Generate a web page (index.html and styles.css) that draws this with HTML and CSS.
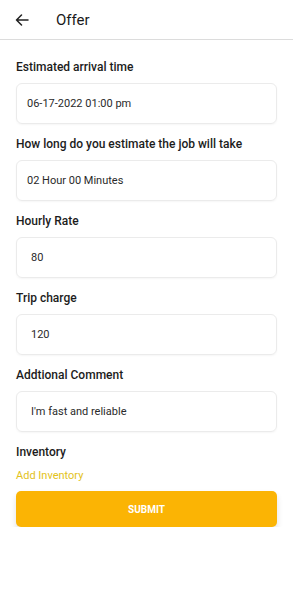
FILE: index.html
```html
<!DOCTYPE html>
<html lang="en">
<head>
  <meta charset="UTF-8">
  <meta name="viewport" content="width=device-width, initial-scale=1.0">
  <title>Offer</title>
  <link rel="stylesheet" href="styles.css">
</head>
<body>
  <div class="topbar">
    <svg class="back" width="14" height="12" viewBox="0 0 14 12">
      <path d="M13 6H1.5M6.5 1L1.5 6l5 5" fill="none" stroke="#222" stroke-width="1.5" stroke-linecap="round" stroke-linejoin="round"/>
    </svg>
    <span class="title">Offer</span>
  </div>

  <div class="form">
    <div class="label">Estimated arrival time</div>
    <div class="field">06-17-2022 01:00 pm</div>

    <div class="label">How long do you estimate the job will take</div>
    <div class="field">02 Hour 00 Minutes</div>

    <div class="label">Hourly Rate</div>
    <div class="field num">80</div>

    <div class="label">Trip charge</div>
    <div class="field num">120</div>

    <div class="label">Addtional Comment</div>
    <div class="field num">I'm fast and reliable</div>

    <div class="label">Inventory</div>
    <div class="add">Add Inventory</div>
    <div class="submit">SUBMIT</div>
  </div>
</body>
</html>
```

FILE: styles.css
```css
body {
  margin: 0;
  background: #fff;
  font-family: Roboto, "Noto Sans", sans-serif;
  color: #1c1c1c;
}
.topbar {
  height: 39px;
  border-bottom: 1px solid #dcdcdc;
  display: flex;
  align-items: center;
  padding-left: 15px;
}
.back {
  margin-right: 27px;
}
.title {
  font-size: 15px;
  color: #1a1a1a;
}
.form {
  padding: 19px 16px 0 16px;
}
.label {
  font-size: 12px;
  font-weight: 500;
  line-height: 16px;
  margin-bottom: 8px;
}
.field {
  height: 39px;
  border: 1px solid #ebebeb;
  border-radius: 6px;
  box-shadow: 0 1px 2px rgba(0, 0, 0, 0.04);
  display: flex;
  align-items: center;
  padding-left: 10px;
  font-size: 11px;
  color: #2a2a2a;
  margin-bottom: 12px;
}
.field.num {
  padding-left: 14px;
}
.add {
  font-size: 11px;
  line-height: 13px;
  color: #e3c21a;
  margin-top: 9px;
  margin-bottom: 9px;
}
.submit {
  height: 36px;
  background: #fbb404;
  border-radius: 5px;
  box-shadow: 0 4px 6px rgba(0, 0, 0, 0.12);
  color: #fff;
  font-size: 10px;
  font-weight: 700;
  display: flex;
  align-items: center;
  justify-content: center;
}
```
